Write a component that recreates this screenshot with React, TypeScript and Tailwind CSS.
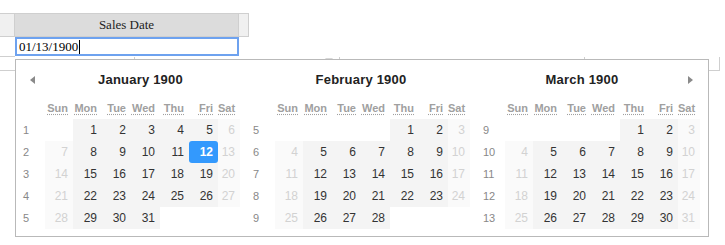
import React from 'react';

type Cell = { d: number | null; weekend?: boolean };

const monthWeeks = (startDow: number, days: number, firstWeek: number) => {
    // startDow: 0 = Sun ... 6 = Sat
    const weeks: { no: number; cells: Cell[] }[] = [];
    let day = 1 - startDow;
    let no = firstWeek;
    while (day <= days) {
        const cells: Cell[] = [];
        for (let i = 0; i < 7; i++) {
            const valid = day >= 1 && day <= days;
            cells.push({ d: valid ? day : null, weekend: i === 0 || i === 6 });
            day++;
        }
        weeks.push({ no, cells });
        no++;
    }
    return weeks;
};

const months = [
    { title: 'January 1900', weeks: monthWeeks(1, 31, 1), prev: true, next: false, selected: 12 },
    { title: 'February 1900', weeks: monthWeeks(4, 28, 5), prev: false, next: false, selected: 0 },
    { title: 'March 1900', weeks: monthWeeks(4, 31, 9), prev: false, next: true, selected: 0 },
];

const dayNames = ['Sun', 'Mon', 'Tue', 'Wed', 'Thu', 'Fri', 'Sat'];
const colWidths = ['w-[28px]', 'w-[29px]', 'w-[29px]', 'w-[29px]', 'w-[29px]', 'w-[29px]', 'w-[22px]'];

const Month = ({ m }: { m: (typeof months)[number] }) => (
    <div className="w-[230px] shrink-0">
        {/* Title row */}
        <div className="flex items-center h-[22px]">
            {m.prev && (
                <span className="ml-[14px] w-0 h-0 border-y-[4px] border-y-transparent border-r-[5px] border-r-[#8a8a8a]"></span>
            )}
            <div className="flex-1 text-center text-[13px] font-bold text-[#222] tracking-[0.2px]">{m.title}</div>
            {m.next && (
                <span className="mr-[13px] w-0 h-0 border-y-[4px] border-y-transparent border-l-[5px] border-l-[#8a8a8a]"></span>
            )}
        </div>

        {/* Day names */}
        <div className="flex h-[22px] mt-[6px] items-center">
            <div className="w-[29px]"></div>
            {dayNames.map((n, i) => (
                <div key={n} className={`${colWidths[i]} text-right pr-[5px] text-[11px] font-bold text-[#a0a0a0]`}>
                    <span className="underline decoration-dotted underline-offset-2">{n}</span>
                </div>
            ))}
        </div>

        {/* Weeks */}
        {m.weeks.map((w) => (
            <div key={w.no} className="flex h-[22px]">
                <div className="w-[29px] pl-[7px] flex items-center text-[11px] text-[#888]">{w.no}</div>
                {w.cells.map((c, i) => {
                    const sel = c.d === m.selected;
                    let cls = 'bg-transparent';
                    if (c.d !== null) cls = c.weekend ? 'bg-[#fafafa] text-[#d2d2d2]' : 'bg-[#f4f4f4] text-[#333]';
                    return (
                        <div key={i} className={`${colWidths[i]} ${cls} flex items-stretch`}>
                            {c.d !== null && (
                                <div
                                    className={`flex-1 flex items-center justify-end pr-[5px] text-[12px] ${
                                        sel ? 'bg-[#3399fd] text-white font-bold rounded-[3px]' : ''
                                    }`}
                                >
                                    {c.d}
                                </div>
                            )}
                        </div>
                    );
                })}
            </div>
        ))}
    </div>
);

export default function App() {
    return (
        <div className="relative w-[725px] h-[245px] bg-white overflow-hidden font-['Liberation_Sans',Arial,sans-serif]">
            {/* Grid header */}
            <div className="flex mt-[13px] h-[24px] w-[249px] border-y border-[#cfcfcf] font-['Liberation_Serif',serif]">
                <div className="w-[15px] bg-[#f0f0f0] border-r border-[#cfcfcf]"></div>
                <div className="w-[224px] bg-[#dcdcdc] border-r border-[#cfcfcf] flex items-center justify-center text-[13px] text-[#222]">
                    Sales Date
                </div>
                <div className="w-[10px] bg-[#f0f0f0] border-r border-[#cfcfcf]"></div>
            </div>

            {/* Editing row */}
            <div className="flex h-[20px] font-['Liberation_Serif',serif]">
                <div className="w-[15px] border-b border-[#cfcfcf]"></div>
                <div className="w-[224px] h-[19px] border-2 border-[#6ea2ef] flex items-center pl-[2px] text-[13px] text-black">
                    01/13/1900
                    <span className="w-px h-[14px] bg-black ml-[1px]"></span>
                </div>
            </div>

            {/* Grid body behind the popup */}
            <div className="flex h-[14px] w-[720px] border-b border-[#cfcfcf]">
                <div className="w-[135px] border-r border-[#cfcfcf]"></div>
                <div className="w-[205px] border-r border-[#cfcfcf] flex justify-end pr-[6px]">
                    <span className="mt-px w-0 h-0 border-x-[4px] border-x-transparent border-t-[5px] border-t-[#d8d8d8]"></span>
                </div>
                <div className="w-[245px] border-r border-[#cfcfcf]"></div>
                <div className="w-[135px] border-r border-[#cfcfcf]"></div>
            </div>

            {/* Date picker popup */}
            <div className="absolute left-[15px] top-[59px] w-[694px] h-[178px] border border-[#b9b9b9] bg-white pt-[9px]">
                <div className="flex">
                    {months.map((m) => (
                        <Month key={m.title} m={m} />
                    ))}
                </div>
            </div>
        </div>
    );
}
